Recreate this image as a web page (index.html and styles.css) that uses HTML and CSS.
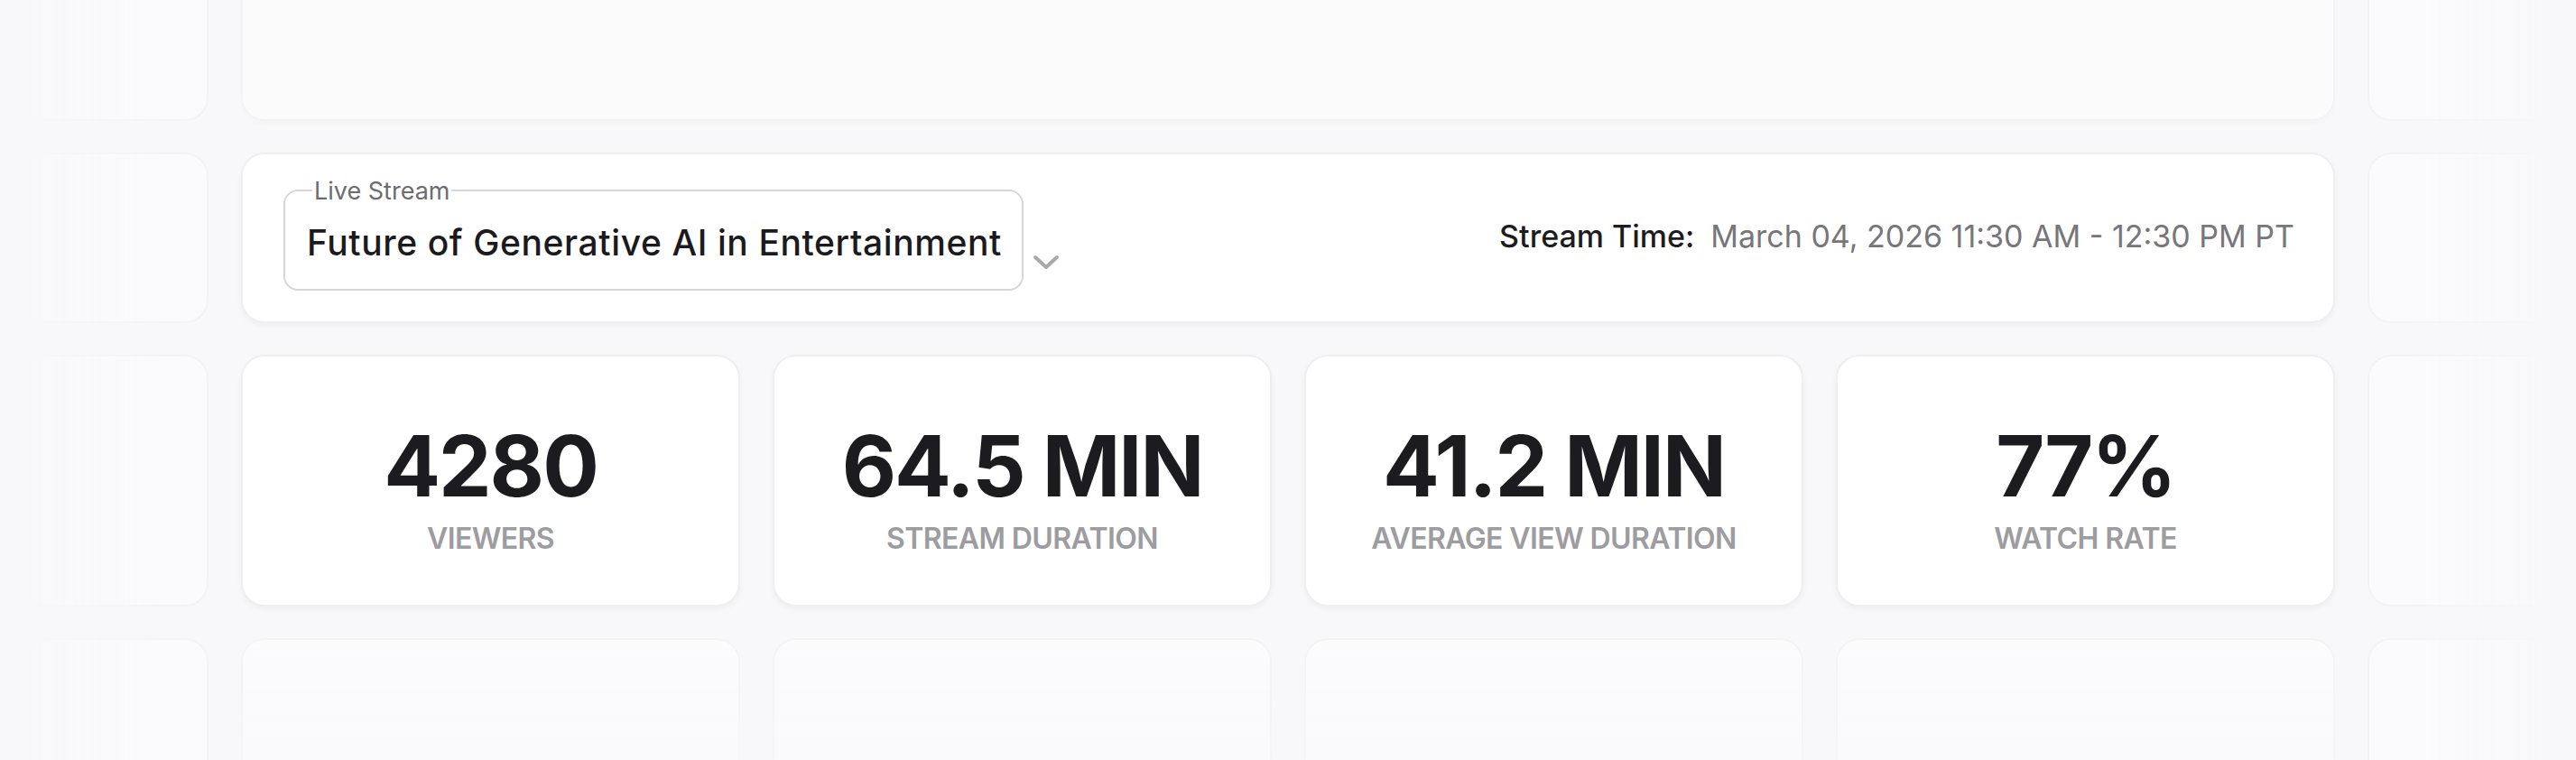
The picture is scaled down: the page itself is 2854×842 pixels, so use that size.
FILE: index.html
```html
<!DOCTYPE html>
<html lang="en">
<head>
    <meta charset="UTF-8">
    <meta name="viewport" content="width=device-width, initial-scale=1.0">
    <link rel="stylesheet" href="styles.css">
    <title>Live Stream Stats</title>
</head>
<body>
    <div class="board">
        <div class="card ghost side left"></div>
        <div class="card ghost wide"></div>
        <div class="card ghost side right"></div>

        <div class="card ghost side left"></div>
        <div class="card stream-bar wide">
            <div class="picker">
                <fieldset class="field">
                    <legend>Live Stream</legend>
                    <div class="field-value">Future of Generative AI in Entertainment</div>
                </fieldset>
                <svg class="chevron" width="30" height="18" viewBox="0 0 30 18">
                    <path d="M3 3 L15 14 L27 3" fill="none" stroke="#a9a8ad" stroke-width="4" stroke-linecap="round" stroke-linejoin="round"/>
                </svg>
            </div>
            <div class="stream-time">
                <span class="stream-time-label">Stream Time:</span>
                <span class="stream-time-value">March 04, 2026 11:30 AM - 12:30 PM PT</span>
            </div>
        </div>
        <div class="card ghost side right"></div>

        <div class="card ghost side left"></div>
        <div class="card stat">
            <div class="stat-value">4280</div>
            <div class="stat-label">VIEWERS</div>
        </div>
        <div class="card stat">
            <div class="stat-value">64.5 MIN</div>
            <div class="stat-label">STREAM DURATION</div>
        </div>
        <div class="card stat">
            <div class="stat-value">41.2 MIN</div>
            <div class="stat-label">AVERAGE VIEW DURATION</div>
        </div>
        <div class="card stat">
            <div class="stat-value">77%</div>
            <div class="stat-label">WATCH RATE</div>
        </div>
        <div class="card ghost side right"></div>

        <div class="card ghost side left"></div>
        <div class="card ghost low"></div>
        <div class="card ghost low"></div>
        <div class="card ghost low"></div>
        <div class="card ghost low"></div>
        <div class="card ghost side right"></div>
    </div>
</body>
</html>
```

FILE: styles.css
```css
body {
    margin: 0;
    height: 100vh;
    overflow: hidden;
    background-color: #f8f7fa;
    font-family: Inter, "Noto Sans", sans-serif;
    color: #1d1c20;
}


.board {
    display: grid;
    grid-template-columns: 206px repeat(4, 1fr) 206px;
    grid-template-rows: 200px 189px 279px 279px;
    column-gap: 36px;
    row-gap: 35px;
    padding: 0 25px;
    margin-top: -66px;
}


.card {
    box-sizing: border-box;
    background-color: #ffffff;
    border: 2px solid #efeef2;
    border-radius: 26px;
    box-shadow: 0 3px 6px rgba(30, 20, 50, 0.04);
}


.wide {
    grid-column: span 4;
}


.ghost {
    opacity: 0.5;
}


.ghost.side {
    opacity: 0.45;
}


.ghost.left {
    -webkit-mask-image: linear-gradient(to right, transparent 0%, #000 75%);
    mask-image: linear-gradient(to right, transparent 0%, #000 75%);
}


.ghost.right {
    -webkit-mask-image: linear-gradient(to left, transparent 0%, #000 75%);
    mask-image: linear-gradient(to left, transparent 0%, #000 75%);
}


.ghost.low {
    -webkit-mask-image: linear-gradient(to bottom, #000 0%, transparent 100%);
    mask-image: linear-gradient(to bottom, #000 0%, transparent 100%);
}


.stream-bar {
    display: flex;
    align-items: center;
    justify-content: space-between;
    padding: 0 43px 8px 45px;
}


.picker {
    display: flex;
    align-items: flex-end;
}


.field {
    margin: 0;
    padding: 0 22px 0 24px;
    height: 124px;
    box-sizing: border-box;
    width: 818px;
    border: 2px solid #d7d6da;
    border-radius: 16px;
    display: flex;
    align-items: center;
}


.field legend {
    margin-left: 6px;
    padding: 0 2px;
    font-size: 27px;
    line-height: 1;
    color: #6c6b70;
}


.field-value {
    font-size: 39px;
    font-weight: 500;
    letter-spacing: 0.6px;
    white-space: nowrap;
    color: #1b1a1e;
    margin-top: -8px;
}


.chevron {
    margin: 0 0 22px 10px;
}


.stream-time {
    display: flex;
    align-items: baseline;
    gap: 18px;
    font-size: 34px;
    white-space: nowrap;
    padding-top: 4px;
}


.stream-time-label {
    font-weight: 500;
    color: #1d1c20;
}


.stream-time-value {
    color: #77767b;
}


.stat {
    display: flex;
    flex-direction: column;
    align-items: center;
    justify-content: center;
    padding-top: 18px;
}


.stat-value {
    font-size: 93px;
    font-weight: 700;
    line-height: 1;
    letter-spacing: -2px;
    color: #1c1b1f;
}


.stat-label {
    margin-top: 18px;
    font-size: 32px;
    font-weight: 600;
    line-height: 1;
    letter-spacing: -0.6px;
    color: #9d9ca1;
}
```
